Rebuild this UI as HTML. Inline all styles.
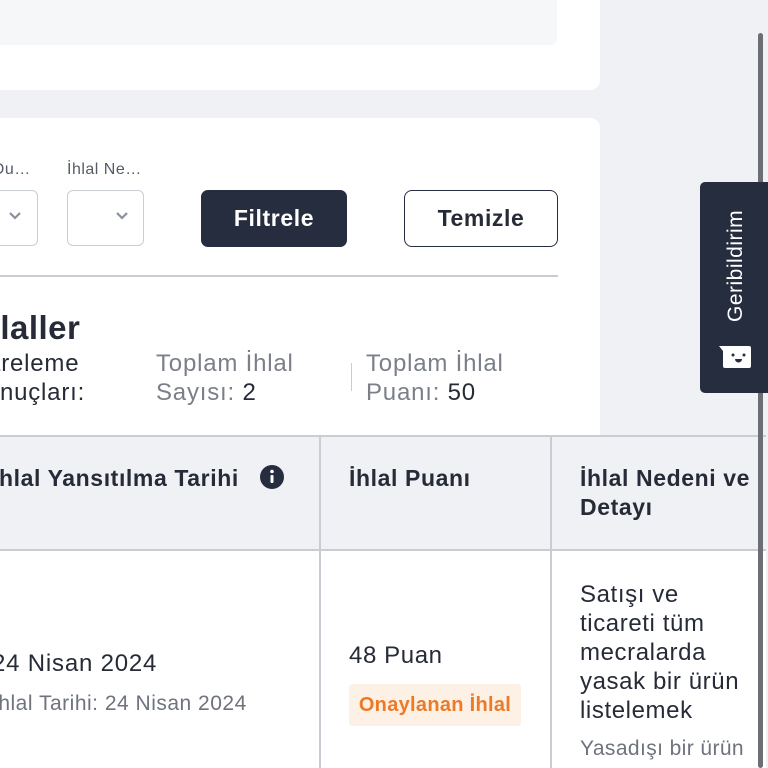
<!DOCTYPE html>
<html><head><meta charset="utf-8"><style>
*{margin:0;padding:0;box-sizing:border-box}
html,body{width:768px;height:768px;overflow:hidden}
body{background:#f0f1f5;font-family:"Liberation Sans",sans-serif;color:#262b37;position:relative}
.a{position:absolute;white-space:nowrap}
</style></head><body>
<div class="a" style="left:0;top:0;width:600px;height:90px;background:#fff;border-radius:0 0 10px 0"></div>
<div class="a" style="left:0;top:0;width:557px;height:45px;background:#f6f7f9;border-radius:0 0 6px 0"></div>
<div class="a" style="left:0;top:118px;width:600px;height:330px;background:#fff;border-radius:0 10px 0 0"></div>

<div class="a" style="left:-44px;top:161px;font-size:16px;letter-spacing:.5px;color:#555b67">İhlal Du…</div>
<div class="a" style="left:67px;top:161px;font-size:16px;letter-spacing:.5px;color:#555b67">İhlal Ne…</div>
<div class="a" style="left:-20px;top:190px;width:58px;height:56px;border:1.5px solid #c9cdd4;border-radius:6px"></div>
<div class="a" style="left:67px;top:190px;width:77px;height:56px;border:1.5px solid #c9cdd4;border-radius:6px"></div>
<svg class="a" style="left:8px;top:211px" width="14" height="10"><path d="M2 2l5 5 5-5" stroke="#8a909a" stroke-width="2.2" fill="none"/></svg>
<svg class="a" style="left:115px;top:211px" width="14" height="10"><path d="M2 2l5 5 5-5" stroke="#8a909a" stroke-width="2.2" fill="none"/></svg>
<div class="a" style="left:201px;top:190px;width:146px;height:57px;background:#262d3e;border-radius:7px;color:#fff;font-weight:bold;font-size:23px;letter-spacing:.6px;text-align:center;line-height:57px">Filtrele</div>
<div class="a" style="left:404px;top:190px;width:154px;height:57px;border:1.5px solid #262d3e;border-radius:8px;font-weight:bold;font-size:23px;letter-spacing:.6px;text-align:center;line-height:54px">Temizle</div>
<div class="a" style="left:0;top:275px;width:558px;height:2px;background:#c9ccd3"></div>

<div class="a" style="left:-30px;top:309px;font-size:33px;font-weight:bold;letter-spacing:.5px">İhlaller</div>
<div class="a" style="left:-34px;top:349px;font-size:24px;letter-spacing:.8px;line-height:29px">Filtreleme</div>
<div class="a" style="left:-31px;top:378px;font-size:24px;letter-spacing:.8px;line-height:29px">Sonuçları:</div>
<div class="a" style="left:156px;top:349px;font-size:24px;letter-spacing:.8px;line-height:29px;color:#7a7f89">Toplam İhlal<br>Sayısı: <span style="color:#262b37">2</span></div>
<div class="a" style="left:351px;top:363px;width:1px;height:28px;background:#c9ccd3"></div>
<div class="a" style="left:366px;top:349px;font-size:24px;letter-spacing:.8px;line-height:29px;color:#7a7f89">Toplam İhlal<br>Puanı: <span style="color:#262b37">50</span></div>

<div class="a" style="left:0;top:435px;width:766px;height:116px;background:#f0f1f5;border-top:2px solid #c9ccd3;border-bottom:2px solid #c9ccd3"></div>
<div class="a" style="left:0;top:551px;width:766px;height:217px;background:#fff"></div>
<div class="a" style="left:319px;top:435px;width:2px;height:333px;background:#c9ccd3"></div>
<div class="a" style="left:550px;top:435px;width:2px;height:333px;background:#c9ccd3"></div>
<div class="a" style="left:-8px;top:465px;font-size:23px;letter-spacing:.6px;font-weight:bold">İhlal Yansıtılma Tarihi</div>
<svg class="a" style="left:259px;top:464px" width="26" height="26"><circle cx="13" cy="13" r="12" fill="#262d3e"/><rect x="11.5" y="11" width="3" height="8" rx="1" fill="#fff"/><circle cx="13" cy="7.5" r="1.8" fill="#fff"/></svg>
<div class="a" style="left:349px;top:465px;font-size:23px;letter-spacing:.6px;font-weight:bold">İhlal Puanı</div>
<div class="a" style="left:580px;top:464px;font-size:23px;letter-spacing:.6px;font-weight:bold;line-height:29px">İhlal Nedeni ve<br>Detayı</div>

<div class="a" style="left:-8px;top:650px;font-size:24px;letter-spacing:.8px">24 Nisan 2024</div>
<div class="a" style="left:-8px;top:692px;font-size:21px;letter-spacing:.5px;color:#6e737c">İhlal Tarihi: 24 Nisan 2024</div>
<div class="a" style="left:349px;top:642px;font-size:24px;letter-spacing:.6px">48 Puan</div>
<div class="a" style="left:349px;top:684px;width:172px;height:42px;background:#fdf1e6;border-radius:3px;color:#ec7a27;font-weight:bold;font-size:20px;letter-spacing:.3px;text-align:center;line-height:42px">Onaylanan İhlal</div>
<div class="a" style="left:580px;top:580px;font-size:24px;letter-spacing:.6px;line-height:29px">Satışı ve<br>ticareti tüm<br>mecralarda<br>yasak bir ürün<br>listelemek</div>
<div class="a" style="left:580px;top:737px;font-size:21px;letter-spacing:.4px;color:#6e737c">Yasadışı bir ürün</div>

<div class="a" style="left:758px;top:33px;width:5px;height:735px;background:#6b6e74;border-radius:3px"></div>
<div class="a" style="left:700px;top:182px;width:70px;height:211px;background:#262d3e;border-radius:5px 0 0 5px"></div>
<div class="a" style="left:724px;top:322px;font-size:21px;letter-spacing:.5px;color:#fff;transform:rotate(-90deg);transform-origin:0 0">Geribildirim</div>
<svg class="a" style="left:716px;top:342px" width="38" height="30"><path d="M3 4h30a2 2 0 0 1 2 2v18a2 2 0 0 1-2 2H9a2 2 0 0 1-2-2V9z" fill="#fff"/><circle cx="17" cy="13" r="1.5" fill="#262d3e"/><circle cx="28" cy="13" r="1.5" fill="#262d3e"/><path d="M19 17h7a3.5 3.5 0 0 1-7 0z" fill="#262d3e"/></svg>
</body></html>
